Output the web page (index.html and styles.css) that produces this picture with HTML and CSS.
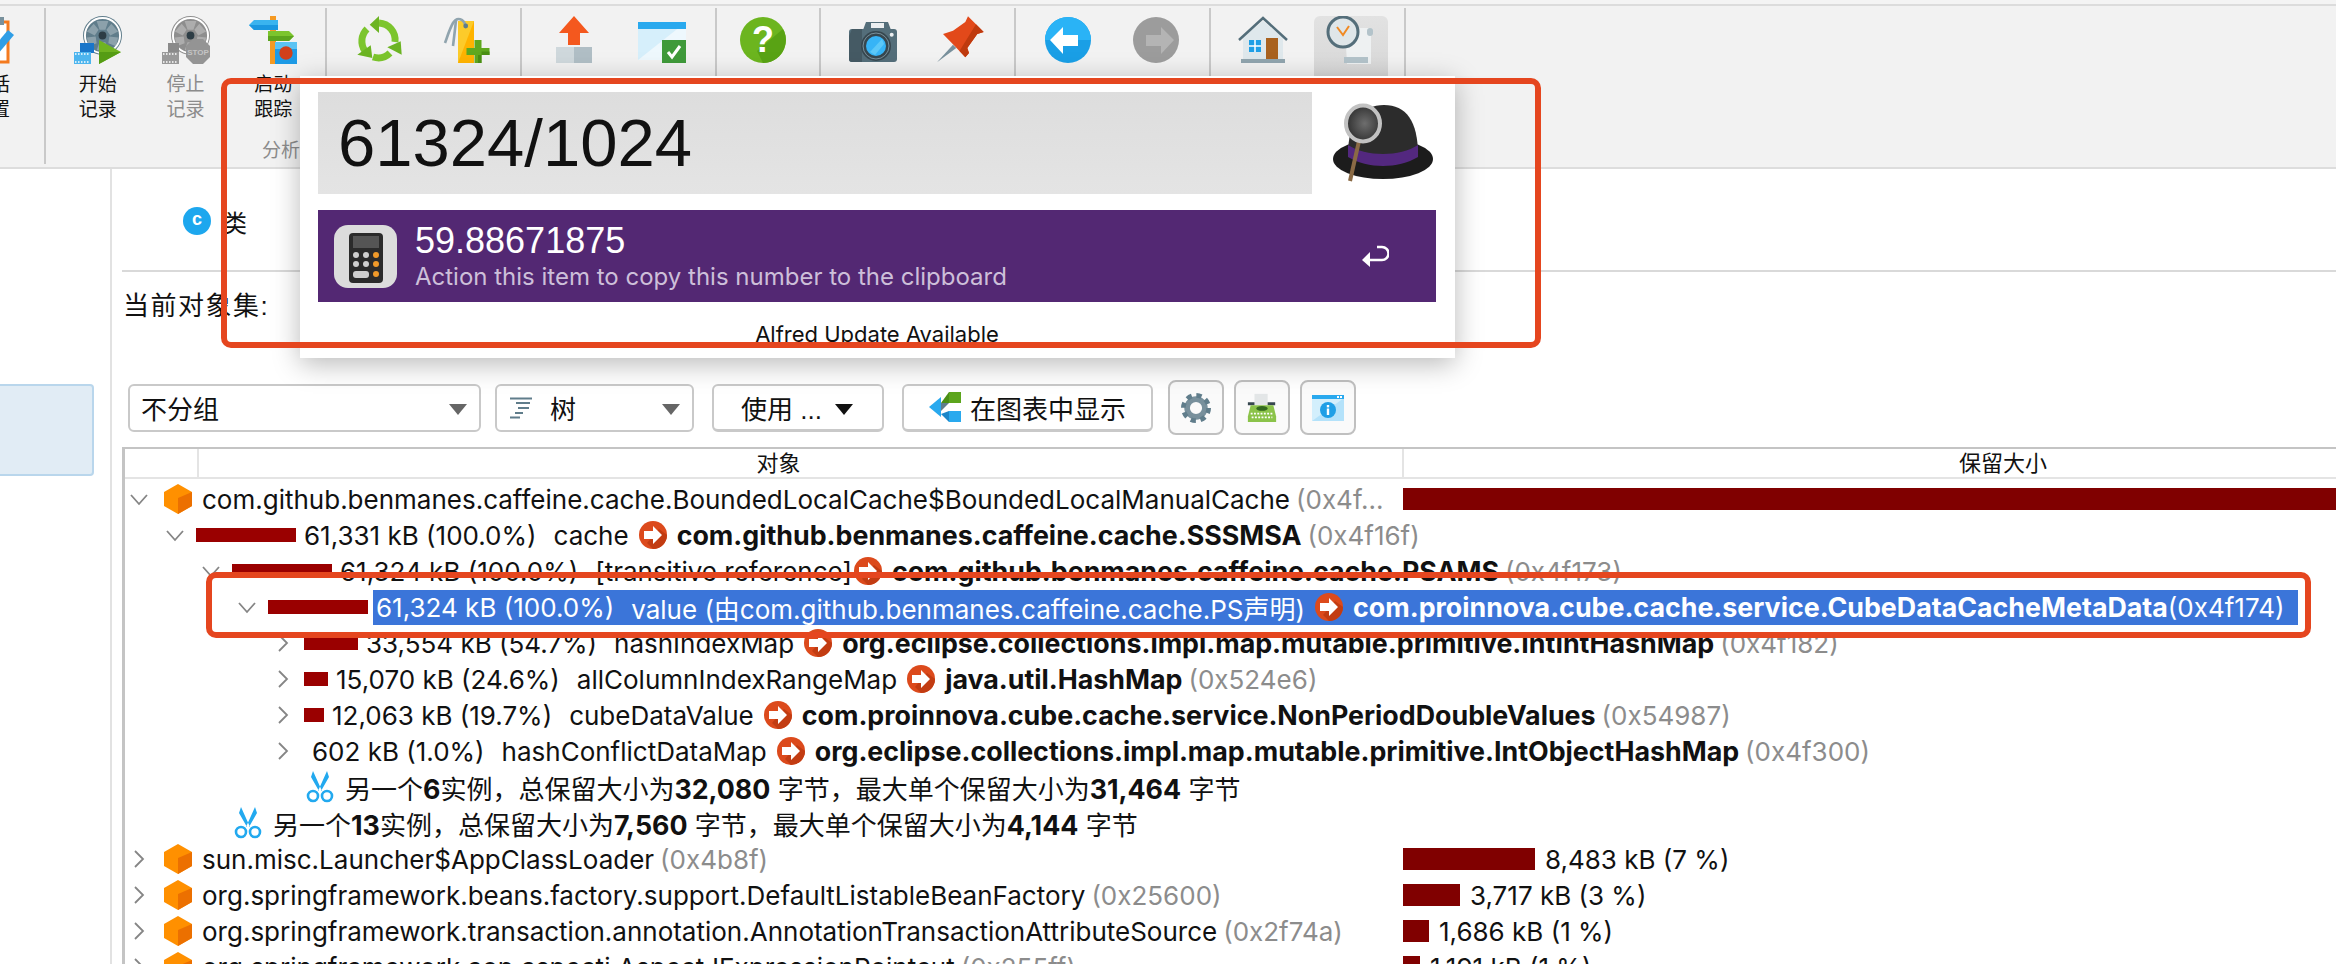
FILE: index.html
```html
<!DOCTYPE html>
<html lang="zh-CN">
<head>
    <meta charset="UTF-8">
    <title>JProfiler</title>
    <link rel="stylesheet" href="styles.css">
</head>
<body>
<svg class="defs" width="0" height="0">
    <defs>
        <symbol id="chev-down" viewBox="0 0 20 20"><path d="M2 6l8 9 8-9" fill="none" stroke="#858585" stroke-width="1.8"/></symbol>
        <symbol id="chev-right" viewBox="0 0 20 20"><path d="M6 2l8 8-8 8" fill="none" stroke="#858585" stroke-width="1.8"/></symbol>
        <symbol id="cube" viewBox="0 0 28 30">
            <path d="M14 0l14 8v14l-14 8-14-8V8z" fill="#ff9000"/>
            <path d="M14 14l14-6v14l-14 8z" fill="#ec7000"/>
        </symbol>
        <symbol id="go" viewBox="0 0 28 28">
            <circle cx="14" cy="14" r="14" fill="#dc4a1c"/>
            <path d="M28 14a14 14 0 0 1-14 14l-6-6 12-14z" fill="#c23c12"/>
            <path d="M5 10h9V5l9 9-9 9v-5H5z" fill="#fff"/>
        </symbol>
        <symbol id="scissors" viewBox="0 0 28 32">
            <path d="M21 0l2 6-8 14h-3zM7 0L5 6l8 14h3z" fill="#22a9ef"/>
            <circle cx="7" cy="25" r="5" fill="none" stroke="#22a9ef" stroke-width="2.6"/>
            <circle cx="21" cy="25" r="5" fill="none" stroke="#22a9ef" stroke-width="2.6"/>
        </symbol>
        <symbol id="reel" viewBox="0 0 40 40">
            <circle cx="20" cy="20" r="20"/>
            <g fill="#fff" fill-opacity=".28">
                <circle cx="20" cy="20" r="18" fill="none" stroke="#fff" stroke-width="2"/>
                <path d="M14 5h12l-3 9h-6zM29 8l7 8-8 4-4-6zM36 22l-2 9-8-3 1-7zM11 8L4 16l8 4 4-6zM4 22l2 9 8-3-1-7zM14 35h12l-3-8h-6z"/>
            </g>
            <circle cx="20" cy="20" r="4" fill="#2d3d45"/>
        </symbol>
        <symbol id="film" viewBox="0 0 17 12">
            <rect width="17" height="12"/>
            <path d="M1 2h15M1 10h15" stroke="#fff" stroke-width="1.4" stroke-dasharray="1.5 1.5"/>
        </symbol>
    </defs>
</svg>

<div class="screen">
    <div class="topline"></div>
    <div class="toolbar">
        <div class="group group-first">
            <div class="tool">
                <svg class="icon" viewBox="0 0 56 48">
                    <rect x="24" y="6" width="26" height="40" fill="#fff" stroke="#f47a1f" stroke-width="3"/>
                    <rect x="34" y="1" width="12" height="8" fill="#78909c"/>
                    <path d="M33 34l17-20 6 5-17 20z" fill="#2f9ee6"/>
                </svg>
                <div class="tool-label">会话<br>设置</div>
            </div>
        </div>
        <div class="group group-record">
            <div class="tools">
                <div class="tool tool-reel">
                    <svg class="icon" viewBox="0 0 56 48">
                        <use href="#reel" x="9" y="0" width="39" height="39" fill="#607d8b"/>
                        <rect x="6" y="27" width="14" height="10" fill="#1976c9"/>
                        <use href="#film" x="0" y="36" width="17" height="12" fill="#4db5ee"/>
                        <path d="M25 24l22 12-22 12z" fill="#6fb320"/>
                        <path d="M25 36h22L25 48z" fill="#559c14"/>
                    </svg>
                    <div class="tool-label">开始<br>记录</div>
                </div>
                <div class="tool tool-reel tool-off">
                    <svg class="icon" viewBox="0 0 56 48">
                        <use href="#reel" x="9" y="0" width="39" height="39" fill="#8e8e8e"/>
                        <rect x="6" y="27" width="11" height="10" fill="#8a8a8a"/>
                        <use href="#film" x="0" y="36" width="17" height="12" fill="#999"/>
                        <path d="M31 23h10l7 7v11l-7 7H31l-7-7V30z" fill="#949494"/>
                        <text x="36" y="38.5" class="stop-text">STOP</text>
                    </svg>
                    <div class="tool-label">停止<br>记录</div>
                </div>
                <div class="tool">
                    <svg class="icon" viewBox="0 0 56 48">
                        <rect x="25" y="0" width="6" height="48" fill="#f59a23"/>
                        <path d="M9 4h24v10H9l-5-5z" fill="#3ab4ef"/>
                        <path d="M4 9h29v5H9z" fill="#1a97e0"/>
                        <path d="M23 15h21l5 5-5 5H23z" fill="#7cc52d"/>
                        <path d="M23 20h26l-5 5H23z" fill="#5ca51d"/>
                        <rect x="30" y="26" width="22" height="22" fill="#1e9be6"/>
                        <rect x="30" y="26" width="22" height="7" fill="#5cc3f3"/>
                        <circle cx="41" cy="37" r="6.7" fill="#d1401a"/>
                    </svg>
                    <div class="tool-label">启动<br>跟踪</div>
                </div>
            </div>
            <div class="group-name">分析</div>
        </div>
        <div class="group group-pair">
            <div class="tools">
                <div class="tool">
                    <svg class="icon" viewBox="0 0 56 48">
                        <g fill="none" stroke="#7cc52d" stroke-width="7">
                            <path d="M28 7A17 17 0 0 1 44 26"/>
                            <path d="M39 37A17 17 0 0 1 22 41"/>
                            <path d="M14 35A17 17 0 0 1 16 13"/>
                        </g>
                        <path d="M18.7 8.7L28 0v17z" fill="#6cb423"/>
                        <path d="M36.3 31.3L49.7 25.3 50.7 38.7z" fill="#6cb423"/>
                        <path d="M6.3 38.7L21.3 42 19.7 29.3z" fill="#6cb423"/>
                    </svg>
                </div>
                <div class="tool">
                    <svg class="icon" viewBox="0 0 56 48">
                        <rect x="19" y="5" width="16" height="42" fill="#fccb2a"/>
                        <path d="M35 5v42H19z" fill="#ffb300"/>
                        <g fill="none" stroke="#90a4ae" stroke-width="2.6">
                            <path d="M26.7 10C25 3 18 0 14 7 10 14 8 22 6 27"/>
                            <path d="M17 4c-1 10-2 18-3 26"/>
                        </g>
                        <circle cx="26.7" cy="10" r="2.4" fill="#607d8b"/>
                        <rect x="35.5" y="24" width="7" height="23" fill="#5fa81f"/>
                        <rect x="27.5" y="32" width="23" height="7" fill="#5fa81f"/>
                        <path d="M39 39h3.5v8H39zM42.5 35.5h8V39h-8z" fill="#4a8f14"/>
                    </svg>
                </div>
            </div>
        </div>
        <div class="group group-pair">
            <div class="tools">
                <div class="tool">
                    <svg class="icon" viewBox="0 0 56 48">
                        <path d="M28 0l15 17h-9v12H22V17h-9z" fill="#f4581e"/>
                        <rect x="10" y="31" width="18" height="16" fill="#cfd8dc"/>
                        <rect x="28" y="31" width="18" height="16" fill="#b0bec5"/>
                    </svg>
                </div>
                <div class="tool">
                    <svg class="icon" viewBox="0 0 56 48">
                        <rect x="4" y="6" width="48" height="38" fill="#d6effb"/>
                        <path d="M4 44L52 6v38z" fill="#eef8fd"/>
                        <rect x="4" y="6" width="48" height="7" fill="#29a9ee"/>
                        <rect x="28" y="24" width="24" height="23" fill="#3f9a3a"/>
                        <path d="M34 36l4 5 8-11" fill="none" stroke="#fff" stroke-width="3"/>
                    </svg>
                </div>
            </div>
        </div>
        <div class="group group-single">
            <div class="tools">
                <div class="tool">
                    <svg class="icon" viewBox="0 0 56 48">
                        <circle cx="28" cy="24" r="23" fill="#6cb51f"/>
                        <path d="M28 47a23 23 0 0 0 20-34L22 35z" fill="#59a314"/>
                        <text x="28" y="36" class="help-text">?</text>
                    </svg>
                </div>
            </div>
        </div>
        <div class="group group-pair">
            <div class="tools">
                <div class="tool">
                    <svg class="icon" viewBox="0 0 56 48">
                        <path d="M21 6h22l3 8H18z" fill="#546e7a"/>
                        <rect x="26" y="7" width="13" height="5" fill="#eceff1"/>
                        <rect x="4" y="13" width="48" height="33" rx="3" fill="#546e7a"/>
                        <path d="M7 13h10v33H7a3 3 0 0 1-3-3V20z" fill="#455a64"/>
                        <circle cx="31" cy="30" r="15" fill="#37474f"/>
                        <circle cx="31" cy="30" r="13" fill="none" stroke="#78909c" stroke-width="1"/>
                        <circle cx="31" cy="30" r="10" fill="#37b4f6"/>
                        <path d="M25 36l12-13 2 5-9 11z" fill="#5cc8f8"/>
                        <circle cx="46.7" cy="18.7" r="2" fill="#eceff1"/>
                    </svg>
                </div>
                <div class="tool">
                    <svg class="icon" viewBox="0 0 56 48">
                        <path d="M20 28.7l3.3 3.3L4 46.3z" fill="#78909c"/>
                        <path d="M35 .3L50.7 16l-6.4 2-10 14 1.7 5-3.7 4.3L21.7 30 10 18l10-3.3L32.3 6z" fill="#e2491a"/>
                        <path d="M43 8.3l7.7 7.7-6.4 2-10 14 1.7 5-3.7 4.3L26.500 35z" fill="#bf3a0e"/>
                    </svg>
                </div>
            </div>
        </div>
        <div class="group group-pair">
            <div class="tools">
                <div class="tool">
                    <svg class="icon" viewBox="0 0 56 48">
                        <circle cx="28" cy="24" r="23" fill="#1a9fe6"/>
                        <path d="M28 1a23 23 0 0 1 23 23H5A23 23 0 0 1 28 1z" fill="#2ab3f6"/>
                        <path d="M10 24l13-13v8h15v11H23v8z" fill="#fff"/>
                    </svg>
                </div>
                <div class="tool">
                    <svg class="icon" viewBox="0 0 56 48">
                        <circle cx="28" cy="24" r="23" fill="#9c9c9c"/>
                        <path d="M46 24L33 11v8H18v11h15v8z" fill="#b4b4b4"/>
                    </svg>
                </div>
            </div>
        </div>
        <div class="group group-pair">
            <div class="tools">
                <div class="tool">
                    <svg class="icon" viewBox="0 0 56 48">
                        <path d="M8 21L28 5l20 16v22H8z" fill="#dfe8ec"/>
                        <path d="M4 24L28 2l24 22" fill="none" stroke="#546e7a" stroke-width="2.5"/>
                        <rect x="14" y="24" width="12" height="12" fill="#1f9fe6"/>
                        <path d="M20 24v12M14 30h12" stroke="#fff" stroke-width="1.5"/>
                        <rect x="31" y="22" width="12" height="21" fill="#a9621f"/>
                        <rect x="6" y="43" width="44" height="4" fill="#90a4ae"/>
                    </svg>
                </div>
                <div class="tool tool-active">
                    <svg class="icon" viewBox="0 0 56 48">
                        <path d="M22 12h26v36H24z" fill="#eef1f2"/>
                        <rect x="21" y="41" width="24" height="6" fill="#b3c3ca"/>
                        <rect x="44" y="12" width="6" height="8" rx="3" fill="#b3c3ca"/>
                        <circle cx="20" cy="16" r="15" fill="#dfe6e9" stroke="#546e7a" stroke-width="3"/>
                        <path d="M14 11l6 8 6-9" fill="none" stroke="#f08a24" stroke-width="2"/>
                    </svg>
                </div>
            </div>
        </div>
    </div>

    <div class="workspace">
        <div class="sidebar">
            <div class="side-item"></div>
        </div>
        <div class="main">
            <div class="tabs">
                <span class="class-badge">c</span>
                <span class="tab-label">类</span>
            </div>
            <div class="current-set">当前对象集:</div>
            <div class="filters">
                <div class="select select-group">不分组<i class="caret"></i></div>
                <div class="select select-view">
                    <svg class="view-icon" viewBox="0 0 22 22"><path d="M0 1.500h22M6 6h14M8 11h11M5 16h8M0 20.500h10" stroke="#607d8b" stroke-width="2.2"/></svg>
                    树<i class="caret"></i>
                </div>
                <div class="button button-use">使用 ...<i class="caret caret-dark"></i></div>
                <div class="button button-graph">
                    <svg class="graph-icon" viewBox="0 0 32 30">
                        <path d="M20 0h12v11H20z" fill="#5ca51d"/>
                        <path d="M20 0v11h-8z" fill="#4a8f14"/>
                        <path d="M0 15L12 5v20z" fill="#29a9ee"/>
                        <path d="M12 11h8l-8 8zM12 19l8 1v0z" fill="#607d8b"/>
                        <path d="M20 19h12v11H20z" fill="#29a9ee"/>
                        <path d="M20 19v11l-8-8z" fill="#1a86c9"/>
                    </svg>
                    在图表中显示
                </div>
                <div class="icon-button">
                    <svg viewBox="0 0 32 32" class="small-icon">
                        <circle cx="16" cy="16" r="9.500" fill="none" stroke="#78909c" stroke-width="6"/>
                        <circle cx="16" cy="16" r="13.500" fill="none" stroke="#607d8b" stroke-width="5" stroke-dasharray="5.600 5"/>
                    </svg>
                </div>
                <div class="icon-button">
                    <svg viewBox="0 0 34 30" class="small-icon">
                        <path d="M9 0h14v12H9z" fill="#e3e6e7"/>
                        <path d="M2 9h7v3H2zM23 9h8v3h-8z" fill="#37474f"/>
                        <path d="M5 12h24l3 12v6H2v-6z" fill="#8bc34a"/>
                        <ellipse cx="17" cy="15.500" rx="6" ry="2.500" fill="#33691e"/>
                        <path d="M5 21h24M6 25h22" stroke="#fff" stroke-width="2" stroke-dasharray="2 1.500"/>
                    </svg>
                </div>
                <div class="icon-button">
                    <svg viewBox="0 0 32 26" class="small-icon">
                        <rect width="32" height="26" fill="#d3effc"/>
                        <path d="M0 26L32 3v23z" fill="#b4e2fa"/>
                        <rect width="32" height="4" fill="#29a9ee"/>
                        <rect x="25" y="1" width="2" height="2" fill="#fff"/>
                        <rect x="28" y="1" width="2" height="2" fill="#fff"/>
                        <circle cx="16" cy="15" r="8" fill="#1f9fe6"/>
                        <rect x="14.800" y="13.500" width="2.400" height="6.500" fill="#fff"/>
                        <rect x="14.800" y="10" width="2.400" height="2.400" fill="#fff"/>
                    </svg>
                </div>
            </div>

            <div class="table">
                <div class="table-head">
                    <div class="head-gutter"></div>
                    <div class="head-name">对象</div>
                    <div class="head-size">保留大小</div>
                </div>

                <div class="row">
                    <div class="name-cell d0">
                        <svg class="chev"><use href="#chev-down"/></svg>
                        <svg class="cube"><use href="#cube"/></svg>
                        <span>com.github.benmanes.caffeine.cache.BoundedLocalCache$BoundedLocalManualCache</span>
                        <span class="addr">(0x4f...</span>
                    </div>
                    <div class="size-cell"><i class="size-bar size-full"></i></div>
                </div>

                <div class="row">
                    <div class="name-cell d1">
                        <svg class="chev"><use href="#chev-down"/></svg>
                        <i class="bar" style="width:100px"></i>
                        <span>61,331 kB (100.0%)</span><span class="field">cache</span>
                        <svg class="go"><use href="#go"/></svg>
                        <b>com.github.benmanes.caffeine.cache.SSSMSA</b>
                        <span class="addr">(0x4f16f)</span>
                    </div>
                </div>

                <div class="row">
                    <div class="name-cell d2">
                        <svg class="chev"><use href="#chev-down"/></svg>
                        <i class="bar" style="width:100px"></i>
                        <span>61,324 kB (100.0%)</span><span class="field">[transitive reference]</span>
                        <svg class="go go-tight"><use href="#go"/></svg>
                        <b>com.github.benmanes.caffeine.cache.PSAMS</b>
                        <span class="addr">(0x4f173)</span>
                    </div>
                </div>

                <div class="row">
                    <div class="name-cell d3">
                        <svg class="chev"><use href="#chev-down"/></svg>
                        <i class="bar" style="width:100px"></i>
                        <div class="selected">
                            <span>61,324 kB (100.0%)</span><span class="field">value (由com.github.benmanes.caffeine.cache.PS声明)</span>
                            <svg class="go"><use href="#go"/></svg>
                            <b>com.proinnova.cube.cache.service.CubeDataCacheMetaData</b>
                            <span class="addr-sel">(0x4f174)</span>
                        </div>
                    </div>
                </div>

                <div class="row">
                    <div class="name-cell d4">
                        <svg class="chev"><use href="#chev-right"/></svg>
                        <i class="bar" style="width:54px"></i>
                        <span>33,554 kB (54.7%)</span><span class="field">hashIndexMap</span>
                        <svg class="go"><use href="#go"/></svg>
                        <b>org.eclipse.collections.impl.map.mutable.primitive.IntIntHashMap</b>
                        <span class="addr">(0x4f182)</span>
                    </div>
                </div>

                <div class="row">
                    <div class="name-cell d4">
                        <svg class="chev"><use href="#chev-right"/></svg>
                        <i class="bar" style="width:24px"></i>
                        <span>15,070 kB (24.6%)</span><span class="field">allColumnIndexRangeMap</span>
                        <svg class="go"><use href="#go"/></svg>
                        <b>java.util.HashMap</b>
                        <span class="addr">(0x524e6)</span>
                    </div>
                </div>

                <div class="row">
                    <div class="name-cell d4">
                        <svg class="chev"><use href="#chev-right"/></svg>
                        <i class="bar" style="width:20px"></i>
                        <span>12,063 kB (19.7%)</span><span class="field">cubeDataValue</span>
                        <svg class="go"><use href="#go"/></svg>
                        <b>com.proinnova.cube.cache.service.NonPeriodDoubleValues</b>
                        <span class="addr">(0x54987)</span>
                    </div>
                </div>

                <div class="row">
                    <div class="name-cell d4">
                        <svg class="chev"><use href="#chev-right"/></svg>
                        <span class="no-bar">602 kB (1.0%)</span><span class="field">hashConflictDataMap</span>
                        <svg class="go"><use href="#go"/></svg>
                        <b>org.eclipse.collections.impl.map.mutable.primitive.IntObjectHashMap</b>
                        <span class="addr">(0x4f300)</span>
                    </div>
                </div>

                <div class="row">
                    <div class="name-cell d4">
                        <i class="chev"></i>
                        <svg class="scissors"><use href="#scissors"/></svg>
                        <span>另一个<b>6</b>实例，总保留大小为<b>32,080</b> 字节，最大单个保留大小为<b>31,464</b> 字节</span>
                    </div>
                </div>

                <div class="row">
                    <div class="name-cell d2">
                        <i class="chev"></i>
                        <svg class="scissors"><use href="#scissors"/></svg>
                        <span>另一个<b>13</b>实例，总保留大小为<b>7,560</b> 字节，最大单个保留大小为<b>4,144</b> 字节</span>
                    </div>
                </div>

                <div class="row">
                    <div class="name-cell d0">
                        <svg class="chev"><use href="#chev-right"/></svg>
                        <svg class="cube"><use href="#cube"/></svg>
                        <span>sun.misc.Launcher$AppClassLoader</span>
                        <span class="addr">(0x4b8f)</span>
                    </div>
                    <div class="size-cell"><i class="size-bar" style="width:132px"></i><span>8,483 kB (7 %)</span></div>
                </div>

                <div class="row">
                    <div class="name-cell d0">
                        <svg class="chev"><use href="#chev-right"/></svg>
                        <svg class="cube"><use href="#cube"/></svg>
                        <span>org.springframework.beans.factory.support.DefaultListableBeanFactory</span>
                        <span class="addr">(0x25600)</span>
                    </div>
                    <div class="size-cell"><i class="size-bar" style="width:57px"></i><span>3,717 kB (3 %)</span></div>
                </div>

                <div class="row">
                    <div class="name-cell d0">
                        <svg class="chev"><use href="#chev-right"/></svg>
                        <svg class="cube"><use href="#cube"/></svg>
                        <span>org.springframework.transaction.annotation.AnnotationTransactionAttributeSource</span>
                        <span class="addr">(0x2f74a)</span>
                    </div>
                    <div class="size-cell"><i class="size-bar" style="width:26px"></i><span>1,686 kB (1 %)</span></div>
                </div>

                <div class="row">
                    <div class="name-cell d0">
                        <svg class="chev"><use href="#chev-right"/></svg>
                        <svg class="cube"><use href="#cube"/></svg>
                        <span>org.springframework.aop.aspectj.AspectJExpressionPointcut</span>
                        <span class="addr">(0x255ff)</span>
                    </div>
                    <div class="size-cell"><i class="size-bar" style="width:17px"></i><span>1,191 kB (1 %)</span></div>
                </div>
            </div>
        </div>
    </div>

    <div class="alfred">
        <div class="alfred-top">
            <div class="alfred-input">61324/1024</div>
            <svg class="hat" viewBox="0 0 102 80">
                <defs>
                    <radialGradient id="lens" cx="55%" cy="50%" r="60%">
                        <stop offset="0" stop-color="#6e6e6e"/>
                        <stop offset="1" stop-color="#2a2a2a"/>
                    </radialGradient>
                </defs>
                <ellipse cx="51" cy="56" rx="50" ry="20" fill="#1c1c1c"/>
                <path d="M16 52C16 18 30 2 52 2c22 0 34 16 34 50-20 12-50 12-70 0z" fill="#2c2c2c"/>
                <path d="M16 42c18 12 52 12 70 0v12c-20 12-50 12-70 0z" fill="#53287f"/>
                <path d="M27 38L18 78" stroke="#8a6a45" stroke-width="4"/>
                <ellipse cx="31" cy="20.500" rx="17" ry="18" fill="url(#lens)" stroke="#c2c2c2" stroke-width="4"/>
            </svg>
        </div>
        <div class="alfred-result">
            <svg class="calc" viewBox="0 0 63 63">
                <rect width="63" height="63" rx="14" fill="#dcdcdc"/>
                <rect x="15" y="8" width="34" height="50" rx="4" fill="#2b2b2b"/>
                <rect x="19" y="11" width="26" height="12" fill="#555"/>
                <g fill="#cfcfcf">
                    <circle cx="22" cy="30" r="3"/><circle cx="32" cy="30" r="3"/>
                    <circle cx="22" cy="39" r="3"/><circle cx="32" cy="39" r="3"/>
                    <rect x="19" y="46" width="16" height="7" rx="3"/>
                </g>
                <g fill="#f09a2a">
                    <circle cx="42" cy="30" r="3"/><circle cx="42" cy="39" r="3"/><circle cx="42" cy="49" r="3"/>
                </g>
            </svg>
            <div class="result-text">
                <div class="result-title">59.88671875</div>
                <div class="result-sub">Action this item to copy this number to the clipboard</div>
            </div>
            <svg class="return" viewBox="0 0 28 22">
                <path d="M16 2h5a6 6 0 0 1 0 13H4" fill="none" stroke="#fff" stroke-width="2.6"/>
                <path d="M9 7L1 15l8 7z" fill="#fff"/>
            </svg>
        </div>
        <div class="alfred-update">Alfred Update Available</div>
    </div>

    <div class="mark mark-alfred"></div>
    <div class="mark mark-row"></div>
</div>
</body>
</html>
```

FILE: styles.css
```css
* {
    box-sizing: border-box;
}

body {
    margin: 0;
    font-family: "Liberation Sans", "Noto Sans CJK SC", sans-serif;
    color: #111;
    background: #fff;
}

.defs {
    position: absolute;
}

.screen {
    position: relative;
    width: 2336px;
    height: 964px;
    overflow: hidden;
}

.topline {
    height: 6px;
    background: #f4f4f4;
    border-bottom: 2px solid #dcdcdc;
}

/* toolbar */
.toolbar {
    display: flex;
    height: 163px;
    background: #f2f2f2;
    border-bottom: 2px solid #dddddd;
}

.group {
    height: 156px;
    margin-top: 2px;
    border-right: 2px solid #c9c9c9;
    padding: 8px 8px 0;
    flex: none;
}

.group-first {
    width: 46px;
    padding: 8px 0 0;
    overflow: hidden;
    display: flex;
    justify-content: flex-end;
}

.group-first .tool {
    margin-right: 2px;
    flex: none;
}

.group-first .tool-label {
    align-self: flex-end;
    text-align: right;
    margin-right: 32px;
}

.group-first .icon {
    align-self: flex-end;
    margin-right: 28px;
}

.group-record {
    width: 281px;
}

.group-pair {
    width: 195px;
}

.group-single {
    width: 104px;
    padding-left: 2px;
}

.tools {
    display: flex;
}

.tool {
    width: 88px;
    display: flex;
    flex-direction: column;
    align-items: center;
}

.tool-reel .icon {
    margin-left: 8px;
}

.tool-active {
    height: 80px;
    width: 74px;
    margin-left: 7px;
    background: linear-gradient(#e2e2e2, #d4d4d4);
    border-radius: 6px;
}

.icon {
    width: 56px;
    height: 48px;
    flex: none;
}

.tool-label {
    margin-top: 8px;
    font-size: 19px;
    line-height: 25px;
    text-align: center;
    white-space: nowrap;
}

.tool-off .tool-label,
.group-name {
    color: #8c8c8c;
}

.group-name {
    margin-top: 16px;
    padding-left: 208px;
    font-size: 19px;
    line-height: 25px;
    white-space: nowrap;
}

.stop-text {
    font-size: 8px;
    font-weight: bold;
    fill: #c4c4c4;
    text-anchor: middle;
}

.help-text {
    font-size: 36px;
    font-weight: bold;
    fill: #fff;
    text-anchor: middle;
}

/* main layout */
.workspace {
    display: flex;
    height: 795px;
}

.sidebar {
    width: 112px;
    flex: none;
    border-right: 2px solid #e2e2e2;
    padding-top: 215px;
}

.side-item {
    width: 94px;
    height: 92px;
    background: #e1ecf5;
    border: 2px solid #b9d6ec;
    border-left: none;
    border-radius: 0 4px 4px 0;
}

.main {
    flex: 1;
    min-width: 0;
}

.tabs {
    height: 103px;
    margin-left: 10px;
    padding: 3px 0 0 61px;
    display: flex;
    align-items: center;
    border-bottom: 2px solid #d9d9d9;
}

.class-badge {
    width: 28px;
    height: 28px;
    border-radius: 50%;
    background: #1da7ee;
    color: #fff;
    font-size: 18px;
    font-weight: bold;
    line-height: 25px;
    text-align: center;
}

.tab-label {
    margin-left: 12px;
    font-size: 24px;
}

.current-set {
    height: 108px;
    margin-left: 11px;
    padding-top: 13px;
    font-size: 26px;
    letter-spacing: 1.5px;
}

/* filter row */
.filters {
    display: flex;
    align-items: center;
    height: 55px;
    margin-left: 16px;
    font-size: 26px;
}

.select,
.button {
    position: relative;
    display: flex;
    align-items: center;
    height: 48px;
    background: #fff;
    border: 2px solid #c9c9c9;
    border-radius: 6px;
    white-space: nowrap;
    flex: none;
}

.select-group {
    width: 353px;
    padding-left: 11px;
}

.select-view {
    width: 199px;
    margin-left: 14px;
    padding-left: 13px;
}

.button-use {
    width: 172px;
    margin-left: 18px;
    padding-left: 27px;
    border-bottom-width: 3px;
}

.button-graph {
    width: 251px;
    margin-left: 18px;
    padding-left: 25px;
    border-bottom-width: 3px;
}

.view-icon {
    width: 22px;
    height: 22px;
    margin-right: 18px;
}

.graph-icon {
    width: 32px;
    height: 30px;
    margin-right: 9px;
}

.caret {
    position: absolute;
    right: 12px;
    top: 18px;
    border-left: 9px solid transparent;
    border-right: 9px solid transparent;
    border-top: 11px solid #666;
}

.caret-dark {
    right: 29px;
    border-top-color: #111;
}

.icon-button {
    display: flex;
    align-items: center;
    justify-content: center;
    width: 56px;
    height: 55px;
    margin-left: 10px;
    border: 2px solid #c0c0c0;
    border-radius: 8px;
    background: #fafafa;
    flex: none;
}

.button-graph + .icon-button {
    margin-left: 15px;
}

.small-icon {
    width: 32px;
    height: 30px;
}

/* object table */
.table {
    margin: 12px 0 0 10px;
    border-left: 3px solid #c4c4c4;
    border-top: 2px solid #c4c4c4;
    font-family: Inter, "Noto Sans CJK SC", sans-serif;
    font-size: 26px;
}

.table b {
    font-size: 26.8px;
}

.table-head {
    display: flex;
    height: 30px;
    border-bottom: 2px solid #e4e4e4;
    font-size: 22px;
    line-height: 28px;
    text-align: center;
}

.head-gutter {
    width: 72px;
    flex: none;
}

.head-name {
    width: 1205px;
    flex: none;
    border-left: 2px solid #e4e4e4;
    padding-right: 44px;
}

.head-size {
    width: 1200px;
    flex: none;
    border-left: 2px solid #e4e4e4;
}

.row {
    display: flex;
    align-items: center;
    height: 36px;
    white-space: nowrap;
}

.row:nth-child(2) {
    margin-top: 2px;
}

.name-cell {
    display: flex;
    align-items: center;
    width: 1277px;
    height: 36px;
    flex: none;
}

.d0 { padding-left: 4px; }
.d1 { padding-left: 40px; }
.d2 { padding-left: 76px; }
.d3 { padding-left: 112px; }
.d4 { padding-left: 148px; }

.chev {
    width: 20px;
    height: 20px;
    flex: none;
}

.cube {
    width: 28px;
    height: 30px;
    margin: 0 10px 0 15px;
    flex: none;
}

.bar {
    height: 14px;
    margin: 0 8px 0 11px;
    background: #9a0000;
    flex: none;
}

.no-bar {
    margin-left: 19px;
}

.field {
    margin-left: 17px;
}

.go {
    width: 28px;
    height: 28px;
    margin: 0 10px;
    flex: none;
}

.go-tight {
    margin-left: 2px;
}

.addr {
    margin-left: 6px;
    color: #8c8c8c;
}

.addr-sel {
    color: #fff;
}

.scissors {
    width: 28px;
    height: 32px;
    margin: 0 11px 0 13px;
    flex: none;
}

.selected {
    display: flex;
    align-items: center;
    height: 35px;
    margin-left: -3px;
    padding: 0 14px 0 3px;
    background: #3b75d9;
    color: #fff;
}

.size-cell {
    display: flex;
    align-items: center;
    padding-left: 1px;
    flex: none;
}

.size-bar {
    height: 22px;
    margin-right: 10px;
    background: #800000;
    flex: none;
}

.size-full {
    width: 1000px;
    margin-right: 0;
}

/* alfred window */
.alfred {
    position: absolute;
    left: 300px;
    top: 76px;
    width: 1155px;
    height: 282px;
    padding: 16px 19px 0 18px;
    background: #fff;
    box-shadow: 0 6px 26px rgba(0, 0, 0, 0.28);
}

.alfred-top {
    display: flex;
    align-items: center;
    height: 102px;
}

.alfred-input {
    width: 994px;
    height: 102px;
    padding-left: 20px;
    background: linear-gradient(#dddddd, #e4e4e4);
    font-size: 67px;
    line-height: 102px;
    flex: none;
}

.hat {
    width: 102px;
    height: 80px;
    margin-left: 20px;
    flex: none;
}

.alfred-result {
    display: flex;
    align-items: center;
    height: 92px;
    margin-top: 16px;
    padding-left: 16px;
    background: #532873;
    color: #fff;
}

.calc {
    width: 63px;
    height: 63px;
    flex: none;
}

.result-text {
    margin-left: 18px;
    width: 946px;
}

.result-title {
    font-size: 36px;
    line-height: 42px;
}

.result-sub {
    font-family: Inter, sans-serif;
    font-size: 24px;
    line-height: 30px;
    color: #cdbfd9;
}

.return {
    width: 28px;
    height: 22px;
}

.alfred-update {
    margin-top: 18px;
    font-family: Inter, sans-serif;
    font-size: 22px;
    line-height: 28px;
    text-align: center;
}

/* red annotation frames */
.mark {
    position: absolute;
    border: 6px solid #e5461f;
    border-radius: 10px;
}

.mark-alfred {
    left: 221px;
    top: 78px;
    width: 1320px;
    height: 270px;
}

.mark-row {
    left: 206px;
    top: 572px;
    width: 2105px;
    height: 66px;
}
```
